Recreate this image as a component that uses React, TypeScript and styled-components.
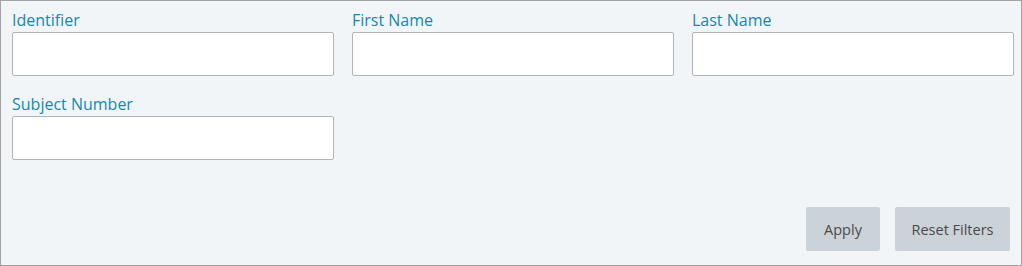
import React from 'react';
import styled, { createGlobalStyle } from 'styled-components';

const GlobalStyle = createGlobalStyle`
  html, body {
    margin: 0;
    padding: 0;
    background: #ffffff;
  }
  * {
    box-sizing: border-box;
  }
`;

const Panel = styled.div`
  width: 1022px;
  height: 266px;
  border: 1px solid #a3a3a3;
  background-color: #f2f5f8;
  padding: 8px 7px 14px 11px;
  display: flex;
  flex-direction: column;
  font-family: 'Open Sans', Lato, sans-serif;
`;

const FieldGrid = styled.div`
  display: grid;
  grid-template-columns: repeat(3, 322px);
  column-gap: 18px;
  row-gap: 17px;
`;

const Field = styled.label`
  display: flex;
  flex-direction: column;
  gap: 1px;
`;

const FieldLabel = styled.span`
  font-size: 16px;
  line-height: 22px;
  color: #1787b0;
`;

const TextInput = styled.input`
  height: 44px;
  width: 100%;
  border: 1px solid #b4b4b4;
  border-radius: 2px;
  background: #ffffff;
  padding: 0 10px;
  font-family: inherit;
  font-size: 15px;
  outline: none;
`;

const Actions = styled.div`
  margin-top: auto;
  display: flex;
  justify-content: flex-end;
  gap: 15px;
  padding-right: 4px;
`;

const Button = styled.button<{ $width: number }>`
  width: ${p => p.$width}px;
  height: 44px;
  border: none;
  border-radius: 2px;
  background-color: #cbd2d8;
  color: #4a4a4a;
  font-family: inherit;
  font-size: 14.5px;
  cursor: pointer;
`;

const fields = ['Identifier', 'First Name', 'Last Name', 'Subject Number'];

export default function App() {
  return (
    <>
      <GlobalStyle />
      <Panel>
        <FieldGrid>
          {fields.map(f => (
            <Field key={f}>
              <FieldLabel>{f}</FieldLabel>
              <TextInput type="text" />
            </Field>
          ))}
        </FieldGrid>
        <Actions>
          <Button $width={74}>Apply</Button>
          <Button $width={115}>Reset Filters</Button>
        </Actions>
      </Panel>
    </>
  );
}
